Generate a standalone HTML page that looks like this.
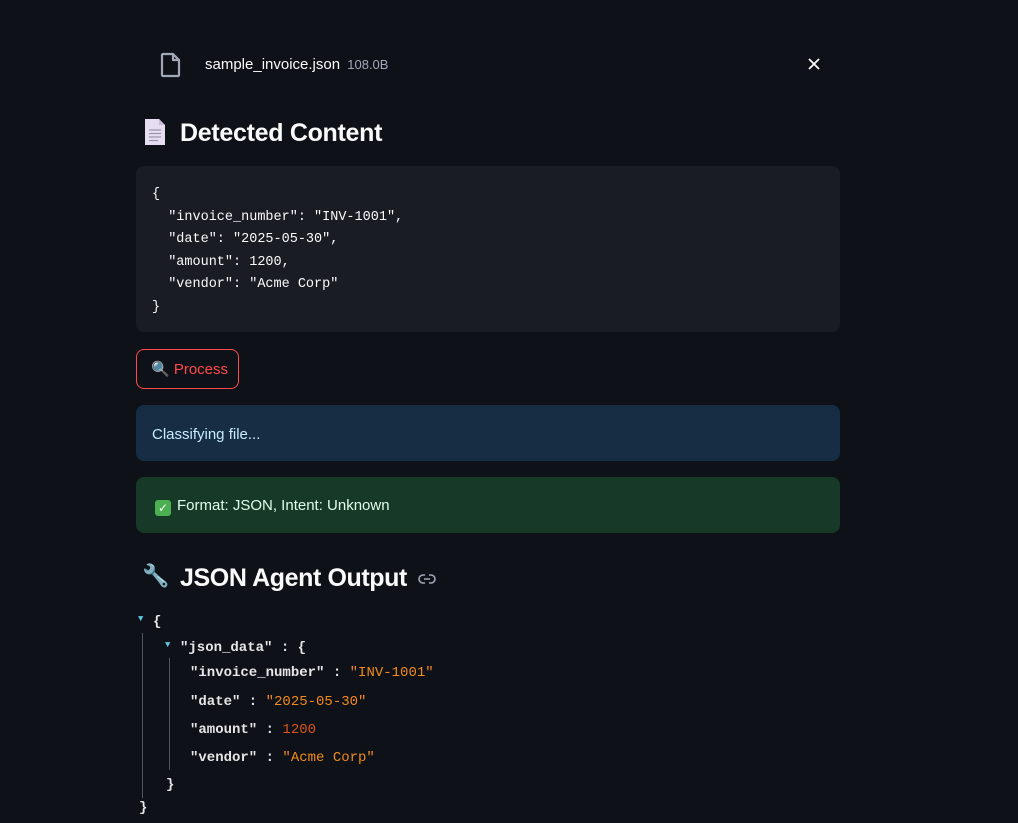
<!DOCTYPE html><html><head><style>
body{margin:0;background:#0e1117;width:1018px;height:823px;overflow:hidden;font-family:"Liberation Sans",sans-serif;color:#fafafa;position:relative}
.a{position:absolute;white-space:nowrap}
.mono{font-family:"Liberation Mono",monospace}
</style></head><body>
<svg class="a" style="left:160px;top:52px" width="22" height="26" viewBox="0 0 22 26"><path d="M3 2h10l6 6v15a1 1 0 0 1-1 1H3a1 1 0 0 1-1-1V3a1 1 0 0 1 1-1z M13 2v6h6" fill="none" stroke="#a3a8b8" stroke-width="2.2" stroke-linejoin="round"/></svg>
<div class="a" style="left:205px;top:56px;font-size:15px">sample_invoice.json <span style="font-size:13px;color:#a3a8b8;margin-left:3px">108.0B</span></div>
<svg class="a" style="left:808px;top:58px" width="12" height="12"><path d="M1 1L11 11M11 1L1 11" stroke="#fafafa" stroke-width="1.8"/></svg>
<svg class="a" style="left:144px;top:118px" width="22" height="28"><path d="M1 1h14l6 6v20H1z" fill="#e6def0"/><path d="M15 1v6h6" fill="#c9bcd9"/><g stroke="#9a92a8" stroke-width="1.2"><line x1="5" y1="12" x2="17" y2="12"/><line x1="5" y1="15.5" x2="17" y2="15.5"/><line x1="5" y1="19" x2="17" y2="19"/><line x1="5" y1="22.5" x2="14" y2="22.5"/></g></svg>
<div class="a" style="left:180px;top:119px;font-size:25px;font-weight:bold;letter-spacing:-0.3px">Detected Content</div>
<div class="a mono" style="left:136px;top:166px;width:704px;height:166px;background:#1a1c24;border-radius:8px;box-sizing:border-box;padding:18px 16px;font-size:13.5px;line-height:22.6px;white-space:pre;color:#fafafa">{
  "invoice_number": "INV-1001",
  "date": "2025-05-30",
  "amount": 1200,
  "vendor": "Acme Corp"
}</div>
<div class="a" style="left:136px;top:349px;width:103px;height:40px;box-sizing:border-box;border:1px solid #ff4b4b;border-radius:8px;color:#ff4b4b;font-size:15px;line-height:40px;padding-left:14px">🔍 Process</div>
<div class="a" style="left:136px;top:405px;width:704px;height:56px;background:#172d43;border-radius:8px;color:#c7ebff;font-size:15px;line-height:60px;padding-left:16px;box-sizing:border-box">Classifying file...</div>
<div class="a" style="left:136px;top:477px;width:704px;height:56px;background:#173928;border-radius:8px;color:#dffde9;font-size:15px;line-height:58px;padding-left:19px;box-sizing:border-box"><span style="display:inline-block;width:16px;height:16px;background:#4caf50;border-radius:3px;color:#fff;font-size:12px;line-height:16px;text-align:center;vertical-align:-2px;margin-right:6px">✓</span>Format: JSON, Intent: Unknown</div>
<div class="a" style="left:142px;top:563px;font-size:22px">🔧</div>
<div class="a" style="left:180px;top:564px;font-size:25px;font-weight:bold;letter-spacing:-0.4px">JSON Agent Output</div>
<svg class="a" style="left:418px;top:573px" width="18" height="12"><path d="M7 2H5a4 4 0 0 0 0 8h2M11 2h2a4 4 0 0 1 0 8h-2M6 6h6" fill="none" stroke="#a3a8b8" stroke-width="1.6"/></svg>
<div class="a mono" style="left:0;top:0;font-size:14px;font-weight:bold;color:#e6e6e6">
<div class="a" style="left:138px;top:614px;color:#5bc8e0;font-size:9px">▼</div>
<div class="a" style="left:153px;top:614px">{</div>
<div class="a" style="left:142px;top:633px;width:1px;height:165px;background:#555"></div>
<div class="a" style="left:165px;top:640px;color:#5bc8e0;font-size:9px">▼</div>
<div class="a" style="left:180px;top:640px">"json_data" : {</div>
<div class="a" style="left:169px;top:658px;width:1px;height:112px;background:#555"></div>
<div class="a" style="left:190px;top:665px">"invoice_number" : <span style="color:#f28b1b;font-weight:normal">"INV-1001"</span></div>
<div class="a" style="left:190px;top:694px">"date" : <span style="color:#f28b1b;font-weight:normal">"2025-05-30"</span></div>
<div class="a" style="left:190px;top:722px">"amount" : <span style="color:#d9541e;font-weight:normal">1200</span></div>
<div class="a" style="left:190px;top:750px">"vendor" : <span style="color:#f28b1b;font-weight:normal">"Acme Corp"</span></div>
<div class="a" style="left:166px;top:777px">}</div>
<div class="a" style="left:139px;top:800px">}</div>
</div>
</body></html>
